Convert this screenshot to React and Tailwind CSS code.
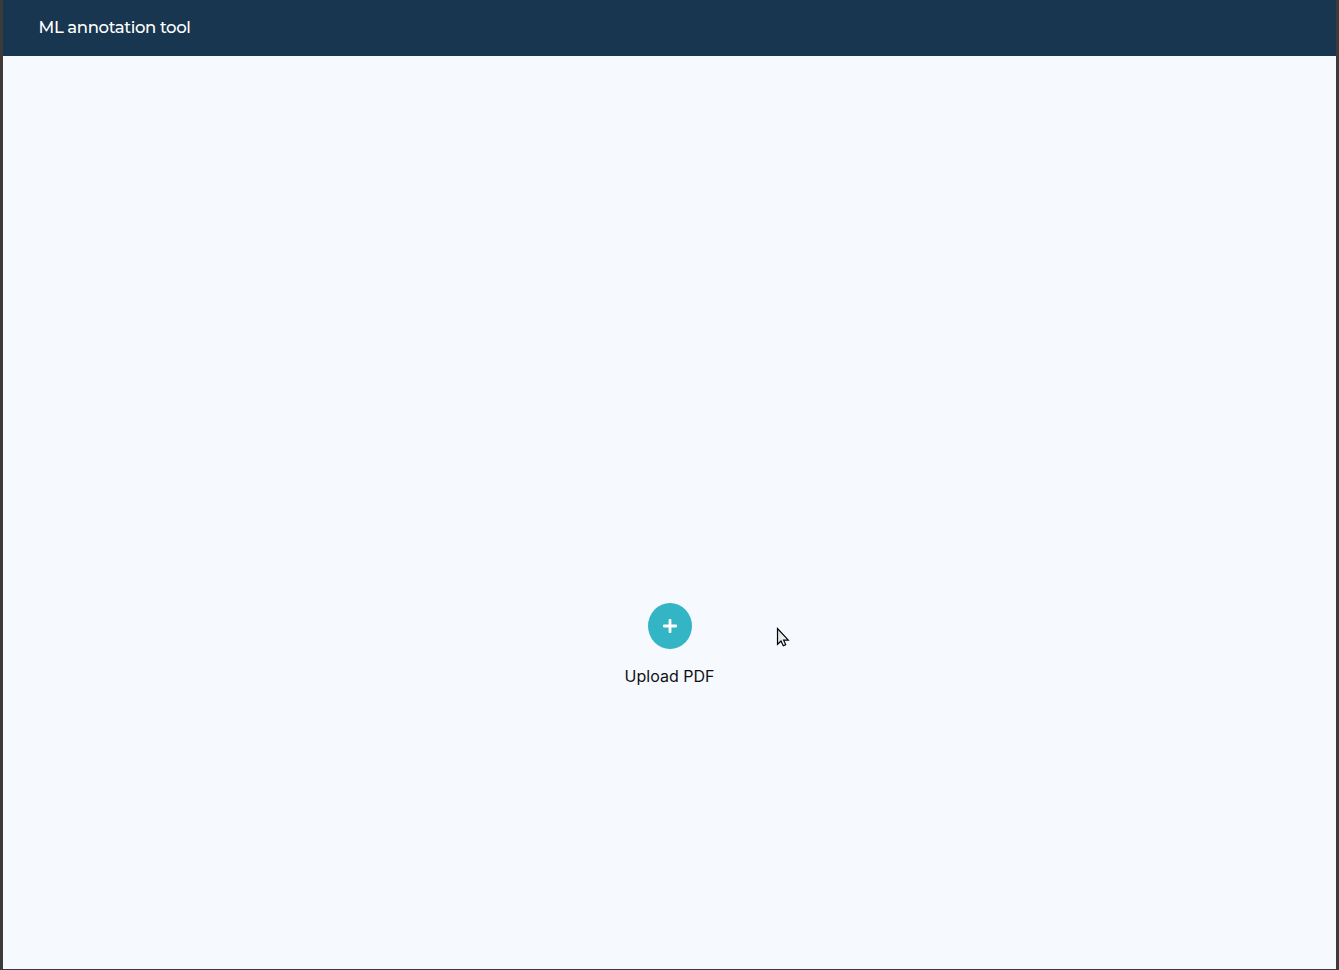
import React from "react";

function Header() {
  return (
    <header className="flex h-14 shrink-0 items-center bg-[#18364f] pl-[35.5px] pb-[3px]">
      <h1 className="font-['Montserrat','Inter',sans-serif] text-[16.5px] leading-6 font-medium tracking-[-0.38px] whitespace-nowrap text-white">
        ML annotation tool
      </h1>
    </header>
  );
}

function UploadButton() {
  return (
    <button type="button" className="flex flex-col items-center gap-[15px]">
      <span className="ml-px flex h-[46px] w-11 items-center justify-center rounded-[50%] bg-[#33b5c5]">
        <svg width="14" height="14" viewBox="0 0 14 14" className="text-white" aria-hidden="true">
          <rect x="5.6" y="0" width="2.8" height="14" rx="0.8" fill="currentColor" />
          <rect x="0" y="5.6" width="14" height="2.8" rx="0.8" fill="currentColor" />
        </svg>
      </span>
      <span className="font-['Inter',sans-serif] text-[16px] leading-6 whitespace-nowrap text-[#111111]">
        Upload PDF
      </span>
    </button>
  );
}

function Pointer() {
  return (
    <svg
      className="pointer-events-none absolute top-[627px] left-[776px]"
      width="14"
      height="21"
      viewBox="0 0 14 21"
      aria-hidden="true"
    >
      <defs>
        <linearGradient id="pointer-fill" x1="0" y1="0" x2="1" y2="0.5">
          <stop offset="0" stopColor="#d6d6d6" />
          <stop offset="1" stopColor="#ffffff" />
        </linearGradient>
      </defs>
      <path
        d="M1.5 1.5V17.3L5 14.1L7.3 18.7L9.7 17.6L7.6 13.1H12.3Z"
        fill="url(#pointer-fill)"
        stroke="#000000"
        strokeWidth="1.2"
      />
    </svg>
  );
}

export default function App() {
  return (
    <div className="relative flex h-screen flex-col overflow-hidden border-x-[3px] border-b border-[#3c3b39] bg-[#f6faff]">
      <Header />
      <main className="flex grow flex-col items-center pt-[547px]">
        <UploadButton />
      </main>
      <div className="absolute -left-[3px] top-0">
        <Pointer />
      </div>
    </div>
  );
}
